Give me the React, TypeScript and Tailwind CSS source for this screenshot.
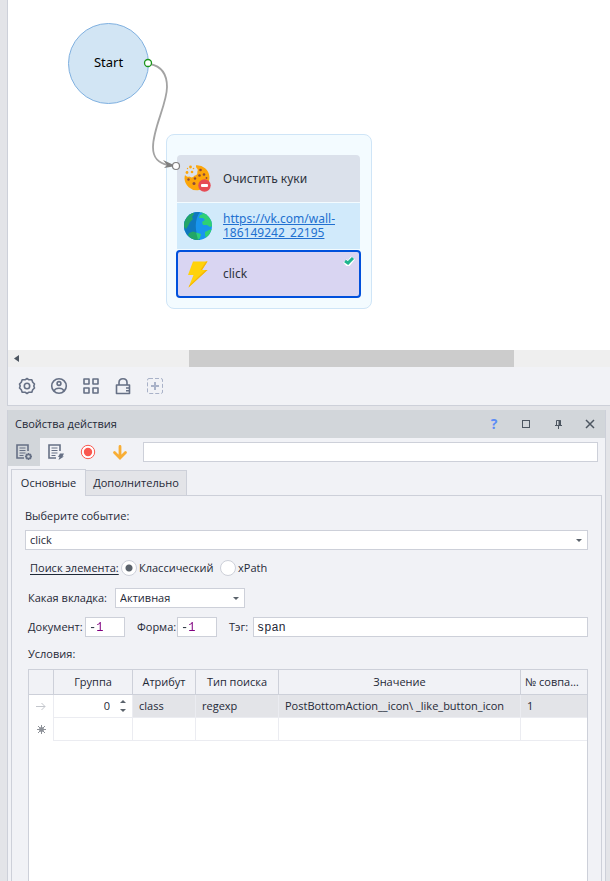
import { useState } from "react";
import type { ReactNode } from "react";

const fieldClass = "h-5 border border-[#cdd0d9] bg-white outline-none";

function Caret({ className }: { className: string }) {
  return (
    <svg width="6" height="3" viewBox="0 0 6 3" className={className}>
      <path d="M0 0h6L3 3z" fill="#5a626b" />
    </svg>
  );
}

function CookieIcon() {
  return (
    <svg width="30" height="30" viewBox="0 0 30 30">
      <path
        d="M13 1.300A12.500 12.500 0 1 1 1.500 14.500C1.500 13.300 1.700 12 2 11c1.200 1.600 3 2.200 4.300 1.600 1.500 1.300 4 1 5-.8 2.300-.2 3.500-2 3-4 .9-1.600.5-3-.8-3.800C13 3 12.800 2 13 1.300z"
        fill="#fca60a"
      />
      <g fill="#fca60a">
        <circle cx="7.500" cy="3" r="1.400" />
        <circle cx="4" cy="8.500" r="1.400" />
        <circle cx="9" cy="8" r="1.300" />
        <circle cx="10.500" cy="4.500" r="0.800" />
        <circle cx="4.500" cy="4.500" r="0.700" />
      </g>
      <g fill="#8b4a3a">
        <circle cx="17.500" cy="6" r="1.300" />
        <circle cx="21" cy="10.500" r="1.300" />
        <circle cx="16.500" cy="11.500" r="1.300" />
        <circle cx="12" cy="14.500" r="1.200" />
        <circle cx="5.500" cy="15.500" r="1.200" />
        <circle cx="11" cy="19.500" r="1.500" />
        <circle cx="23.500" cy="14" r="0.900" />
      </g>
      <circle cx="21.500" cy="21.500" r="6.200" fill="#e64c55" />
      <rect x="18" y="20" width="7" height="3" rx="1" fill="#fff" />
    </svg>
  );
}

function GlobeIcon() {
  return (
    <svg width="30" height="30" viewBox="0 0 30 30">
      <defs>
        <clipPath id="globe">
          <circle cx="15" cy="15" r="14" />
        </clipPath>
      </defs>
      <g clipPath="url(#globe)">
        <rect width="30" height="30" fill="#1895ee" />
        <path d="M0 0h18C11 7 11 23 18 30H0z" fill="#0f78be" />
        <path d="M1 8c2-3 5-6 9-7l1 2-2 3 1 2-3 3-2 4-2 3-3-3z" fill="#22a567" />
        <path d="M6 22l4-1.500 3 1 1 3 1 5-6-1-4-4z" fill="#22a567" />
        <path d="M13 21.500l5 1.500-1 4-2 2-1-4z" fill="#2ed075" />
        <path d="M17 1l5 0 7 8 1 6-3 1-3-2-4 0-1-3 3-2-2-2-4 0 1-3 3-1z" fill="#2ed075" />
        <path d="M22 21l4-2 3-1-2 6-4 3-1-3z" fill="#2ed075" />
      </g>
    </svg>
  );
}

function BoltIcon() {
  return (
    <svg width="30" height="30" viewBox="0 0 30 30">
      <path d="M10 2.500h14.500L19 11h5.500L5.500 28.500l5-12.500H5z" fill="#ffd20a" />
      <path d="M24.500 2.500L19 11h-1.500l5.500-8.500zM24.500 11L5.500 28.500l.8-2L22.500 11z" fill="#f5b50a" />
    </svg>
  );
}

function StepText({ children }: { children: ReactNode }) {
  return <span className="w-32 leading-[14px]">{children}</span>;
}

function FlowCanvas() {
  return (
    <div className="relative h-[350px] overflow-hidden bg-white text-xs">
      <button
        type="button"
        className="absolute left-[60px] top-[23px] h-[81px] w-[81px] rounded-full border border-[#7fb0e0] bg-[#d2e5f4] pb-0.5 text-[13px] text-black"
      >
        Start
      </button>

      <div className="absolute left-[158px] top-[134px] w-[206px] rounded-lg border border-[#cfe5f7] bg-[#f3fbff] pb-2.5 pl-[9px] pr-2.5 pt-5 text-[#2e3440]">
        <div className="mx-px flex h-[47px] items-center gap-2.5 rounded-t bg-[#dbe1eb] pl-1.5">
          <CookieIcon />
          <StepText>Очистить куки</StepText>
        </div>
        <div className="mx-px mt-px flex h-[46px] items-center gap-2.5 bg-[#d1eafb] pl-1.5">
          <GlobeIcon />
          <StepText>
            <a href="https://vk.com/wall-186149242_22195" className="text-[#2270d0] underline">
              https://vk.com/wall-
              <br />
              186149242_22195
            </a>
          </StepText>
        </div>
        <div className="relative mt-px flex h-12 items-center gap-2.5 rounded-sm rounded-b border-2 border-[#0050dc] bg-[#d9d5f2] pl-[5px]">
          <BoltIcon />
          <StepText>click</StepText>
          <svg className="absolute right-1 top-1" width="12" height="10" viewBox="0 0 12 10" fill="none">
            <path d="M2 5l3 3 5-6" stroke="#fff" strokeWidth="5" />
            <path d="M2 5l3 2 5-5" stroke="#1fb58f" strokeWidth="3" />
          </svg>
        </div>
      </div>

      {/* Link between the start node and the first step */}
      <svg className="absolute left-[132px] top-[53px]" width="50" height="125" viewBox="0 0 50 125" fill="none">
        <path
          d="M10 11C20 13 27 20 27 34C27 51 13 75 13 94C13 105 18 110 28 112"
          stroke="#a3a3a3"
          strokeWidth="1.800"
        />
        <path d="M23 107l13 6-12 2 3-3z" fill="#7f7f7f" />
        <circle cx="8" cy="10" r="3.500" fill="#fff" stroke="#1c961c" strokeWidth="1.300" />
        <circle cx="36" cy="113" r="3.500" fill="#fff" stroke="#7f7f7f" strokeWidth="1.200" />
      </svg>
    </div>
  );
}

function CanvasToolbar() {
  const tools = [
    {
      label: "Настройки",
      icon: (
        <>
          <path
            d="M9 1.500l2 1.300 2.800-.1.900 2.500L16.500 7l-.7 2 .7 2-1.800 1.800-.9 2.500-2.800-.1L9 16.500l-2-1.300-2.800.1-.9-2.500L1.500 11l.7-2-.7-2 1.800-1.800.9-2.500 2.800.1z"
            strokeLinejoin="round"
          />
          <circle cx="9" cy="9" r="2.700" />
        </>
      ),
    },
    {
      label: "Профиль",
      icon: (
        <>
          <circle cx="9" cy="9" r="7.300" />
          <circle cx="9" cy="6.500" r="1.900" />
          <path d="M4.300 14.200c.5-4 8.900-4 9.400 0" />
        </>
      ),
    },
    {
      label: "Блоки",
      icon: <path d="M2 2h5v5H2zM11 2h5v5h-5zM2 11h5v5H2zM11 11h5v5h-5z" strokeLinejoin="round" />,
    },
    {
      label: "Блокировка",
      icon: (
        <>
          <path d="M2.500 8h13v8.500h-13z" strokeLinejoin="round" />
          <path d="M5 8V5.500c0-5 8-5 8 0V8M12 11h3M12 13.700h3" />
        </>
      ),
    },
  ];

  return (
    <div className="flex h-[38px] items-center gap-3.5 bg-[#f1f2f6] pl-2.5 text-[#667085]">
      {tools.map((tool) => (
        <button key={tool.label} type="button" aria-label={tool.label}>
          <svg width="18" height="18" viewBox="0 0 18 18" fill="none" stroke="currentColor" strokeWidth="1.600">
            {tool.icon}
          </svg>
        </button>
      ))}
      <button type="button" aria-label="Добавить" className="text-[#a9b2c8]">
        <svg width="18" height="18" viewBox="0 0 18 18" fill="none" stroke="currentColor">
          <rect x="1.500" y="1.500" width="15" height="15" rx="1.500" strokeDasharray="4 2" />
          <path d="M9 5v8M5 9h8" strokeWidth="2" />
        </svg>
      </button>
    </div>
  );
}

function PanelTitle() {
  return (
    <div className="flex h-7 items-center bg-[#d2d6da] pl-[7px] pr-[7px] text-[#4d5661]">
      <h2 className="flex-1 text-[#1f2937]">Свойства действия</h2>
      <div className="flex gap-4">
        <button type="button" aria-label="Справка" className="w-4 text-sm font-bold leading-4 text-[#5c8df6]">
          ?
        </button>
        <button type="button" aria-label="Развернуть">
          <svg width="16" height="16" viewBox="0 0 16 16" fill="none">
            <rect x="4.500" y="4.500" width="7" height="7" stroke="currentColor" />
          </svg>
        </button>
        <button type="button" aria-label="Закрепить">
          <svg width="16" height="16" viewBox="0 0 16 16" fill="none" stroke="currentColor">
            <path d="M6.500 9V4.500h4V9M5 9.500h7M8.500 9v4" />
            <path d="M9.500 4v5" strokeWidth="2" />
          </svg>
        </button>
        <button type="button" aria-label="Закрыть">
          <svg width="16" height="16" viewBox="0 0 16 16" fill="none">
            <path d="M4 4l8 8M12 4l-8 8" stroke="currentColor" strokeWidth="1.500" />
          </svg>
        </button>
      </div>
    </div>
  );
}

function PanelToolbar() {
  return (
    <div className="flex h-7 items-center pr-[7px]">
      <button type="button" aria-label="Свойства" className="flex h-7 w-8 items-center justify-center bg-[#d2d6da]">
        <svg width="18" height="18" viewBox="0 0 18 18" fill="none" stroke="#667085">
          <path d="M13 8V2H2v13h7" strokeWidth="1.600" />
          <path d="M4.500 5h6M4.500 7.500h6M4.500 10h6M4.500 12.500h4" />
          <circle cx="13.500" cy="13.500" r="2.200" strokeWidth="1.700" />
          <path
            d="M13.500 10v1.500M13.500 15.500V17M10 13.500h1.500M15.500 13.500H17M11 11l1 1M15 15l1 1M16 11l-1 1M12 15l-1 1"
            strokeWidth="1.300"
          />
        </svg>
      </button>
      <button type="button" aria-label="Событие" className="flex h-7 w-8 items-center justify-center">
        <svg width="18" height="18" viewBox="0 0 18 18" fill="none" stroke="#667085">
          <path d="M13 8V2H2v13h7" strokeWidth="1.600" />
          <path d="M4.500 5h6M4.500 7.500h6M4.500 10h6M4.500 12.500h4" />
          <path d="M13 10.500h4l-1.500 3h1.500L11.500 17l1-3H11z" fill="#667085" stroke="none" />
        </svg>
      </button>
      <button type="button" aria-label="Запись" className="flex h-7 w-8 items-center justify-center">
        <svg width="16" height="16" viewBox="0 0 16 16">
          <circle cx="8" cy="8" r="6.700" fill="#fff" stroke="#f9584f" />
          <circle cx="8" cy="8" r="4.200" fill="#f9584f" />
        </svg>
      </button>
      <button type="button" aria-label="Вниз" className="flex h-7 w-8 items-center justify-center">
        <svg width="16" height="16" viewBox="0 0 16 16" fill="none" stroke="#f8ae35" strokeLinecap="round">
          <path d="M8 2.500v11M2.500 8.500L8 14l5.500-5.500" strokeWidth="2.800" />
        </svg>
      </button>
      <input aria-label="Комментарий" className={`${fieldClass} ml-[7px] min-w-0 flex-1 px-1`} />
    </div>
  );
}

function ConditionsTable() {
  const cell = "border-b border-r border-[#ebecf1] px-1.5";
  const head = "truncate border-b border-r border-[#cdd0d9] px-1 font-normal last:border-r-0";

  return (
    <div className="ml-4 mr-[13px] flex-1 border border-b-0 border-[#cdd0d9] bg-white">
      <table className="w-full table-fixed border-separate border-spacing-0 text-left">
        <colgroup>
          <col className="w-[25px]" />
          <col className="w-[79px]" />
          <col className="w-[63px]" />
          <col className="w-[83px]" />
          <col />
          <col className="w-[66px]" />
        </colgroup>
        <thead>
          <tr className="h-[25px] bg-[#f1f2f6] text-center">
            <th className={head} />
            <th className={head}>Группа</th>
            <th className={head}>Атрибут</th>
            <th className={head}>Тип поиска</th>
            <th className={head}>Значение</th>
            <th className={head}>№ совпадения</th>
          </tr>
        </thead>
        <tbody>
          <tr className="h-[23px] bg-[#e3e4e8]">
            <td className="border-r border-[#ebecf1] bg-white">
              <svg className="mx-auto" width="10" height="9" viewBox="0 0 10 9" fill="none" stroke="#c3c6cc">
                <path d="M0 4.500h9M5.500 1L9 4.500 5.500 8" />
              </svg>
            </td>
            <td className={`${cell} bg-white`}>
              <div className="flex items-center justify-end gap-2.5">
                <input aria-label="Группа" defaultValue="0" className="w-10 bg-transparent text-right outline-none" />
                <span className="flex flex-col gap-1.5">
                  <button type="button" aria-label="Больше" className="leading-none">
                    <Caret className="rotate-180" />
                  </button>
                  <button type="button" aria-label="Меньше" className="leading-none">
                    <Caret className="" />
                  </button>
                </span>
              </div>
            </td>
            <td className={cell}>class</td>
            <td className={cell}>regexp</td>
            <td className={cell}>PostBottomAction__icon\ _like_button_icon</td>
            <td className={`${cell} border-r-0`}>1</td>
          </tr>
          <tr className="h-[23px]">
            <td className="border-r border-[#ebecf1]">
              <svg className="mx-auto" width="9" height="9" viewBox="0 0 9 9" stroke="#8d9198">
                <path d="M4.500 0v9M0 4.500h9M1 1l7 7M8 1L1 8" />
                <circle cx="4.500" cy="4.500" r="2" fill="#8d9198" />
              </svg>
            </td>
            <td className={cell} />
            <td className={cell} />
            <td className={cell} />
            <td className={cell} />
            <td className={`${cell} border-r-0`} />
          </tr>
        </tbody>
      </table>
    </div>
  );
}

function EventForm() {
  const [search, setSearch] = useState("classic");
  const radio =
    "h-4 w-4 appearance-none rounded-full border border-[#cdd0d9] bg-white checked:bg-[radial-gradient(circle,#5a626b_3px,#fff_4px)]";
  const numberText =
    "w-full bg-[linear-gradient(90deg,#1f2937_7px,#800080_7px)] bg-clip-text text-transparent outline-none";

  return (
    <div className="flex flex-1 flex-col border-x border-[#cdd0d9] pt-3">
      <div className="flex flex-col px-[13px]">
        <label htmlFor="event" className="leading-4">
          Выберите событие:
        </label>
        <div className="relative mt-1.5">
          <select id="event" className={`${fieldClass} block w-full appearance-none px-1`}>
            <option>click</option>
          </select>
          <Caret className="pointer-events-none absolute right-1.5 top-[9px]" />
        </div>
      </div>

      <div role="radiogroup" aria-labelledby="search" className="mt-2.5 flex h-4 items-center pl-[18px]">
        <span id="search" className="w-[91px] underline underline-offset-2">
          Поиск элемента:
        </span>
        <label className="flex w-[99px] items-center gap-0.5">
          <input
            type="radio"
            name="search"
            className={radio}
            checked={search === "classic"}
            onChange={() => setSearch("classic")}
          />
          Классический
        </label>
        <label className="flex items-center gap-0.5">
          <input
            type="radio"
            name="search"
            className={radio}
            checked={search === "xpath"}
            onChange={() => setSearch("xpath")}
          />
          xPath
        </label>
      </div>

      <div className="mt-3 flex h-5 items-center pl-4">
        <label htmlFor="tab" className="w-[87px]">
          Какая вкладка:
        </label>
        <div className="relative w-[130px]">
          <select id="tab" className={`${fieldClass} block w-full appearance-none px-1`}>
            <option>Активная</option>
          </select>
          <Caret className="pointer-events-none absolute right-1.5 top-[9px]" />
        </div>
      </div>

      <div className="mt-[9px] flex h-5 items-center pl-4 pr-[13px]">
        <label htmlFor="doc" className="w-[57px]">
          Документ:
        </label>
        <div className={`${fieldClass} flex w-10 items-center px-[3px] pt-0.5 font-[Liberation_Mono,monospace] text-xs`}>
          <input id="doc" defaultValue="-1" className={numberText} />
        </div>
        <label htmlFor="form" className="ml-3 w-10">
          Форма:
        </label>
        <div className={`${fieldClass} flex w-10 items-center px-[3px] pt-0.5 font-[Liberation_Mono,monospace] text-xs`}>
          <input id="form" defaultValue="-1" className={numberText} />
        </div>
        <label htmlFor="tag" className="ml-3 w-6">
          Тэг:
        </label>
        <input
          id="tag"
          defaultValue="span"
          className={`${fieldClass} min-w-0 flex-1 px-[3px] pt-0.5 font-[Liberation_Mono,monospace] text-xs`}
        />
      </div>

      <h3 className="mb-[7px] mt-[9px] pl-4 leading-4">Условия:</h3>
      <ConditionsTable />
    </div>
  );
}

export default function App() {
  return (
    <div className="flex min-h-screen flex-col gap-1 bg-[#e3e4e8] pl-[7px] font-['Noto_Sans',sans-serif] text-[11px] text-[#1f2937]">
      <section className="border-b border-l border-[#cdd0d9]">
        <FlowCanvas />
        <div className="flex h-[17px] items-center bg-[#efefef]">
          <button type="button" aria-label="Влево" className="flex w-[30%] pl-1.5">
            <svg width="5" height="7" viewBox="0 0 5 7">
              <path d="M5 0v7L0 3.500z" fill="#4d5661" />
            </svg>
          </button>
          <div className="h-full w-[54%] bg-[#cccccc]" />
        </div>
        <CanvasToolbar />
      </section>

      <section className="mr-1 flex flex-1 flex-col border-x border-[#cdd0d9] bg-[#f1f2f6] font-['Open_Sans',sans-serif]">
        <PanelTitle />
        <PanelToolbar />
        <div className="mx-[3px] flex flex-1 flex-col pt-[3px]">
          <div role="tablist" className="flex h-[27px] items-end">
            <button
              type="button"
              role="tab"
              aria-selected="true"
              className="h-[27px] w-[75px] border border-b-0 border-[#cdd0d9]"
            >
              Основные
            </button>
            <button
              type="button"
              role="tab"
              aria-selected="false"
              className="h-[26px] w-[101px] border border-l-0 border-[#cdd0d9] bg-[#e3e4e8]"
            >
              Дополнительно
            </button>
            <div className="h-full flex-1 border-b border-[#cdd0d9]" />
          </div>
          <EventForm />
        </div>
      </section>
    </div>
  );
}
